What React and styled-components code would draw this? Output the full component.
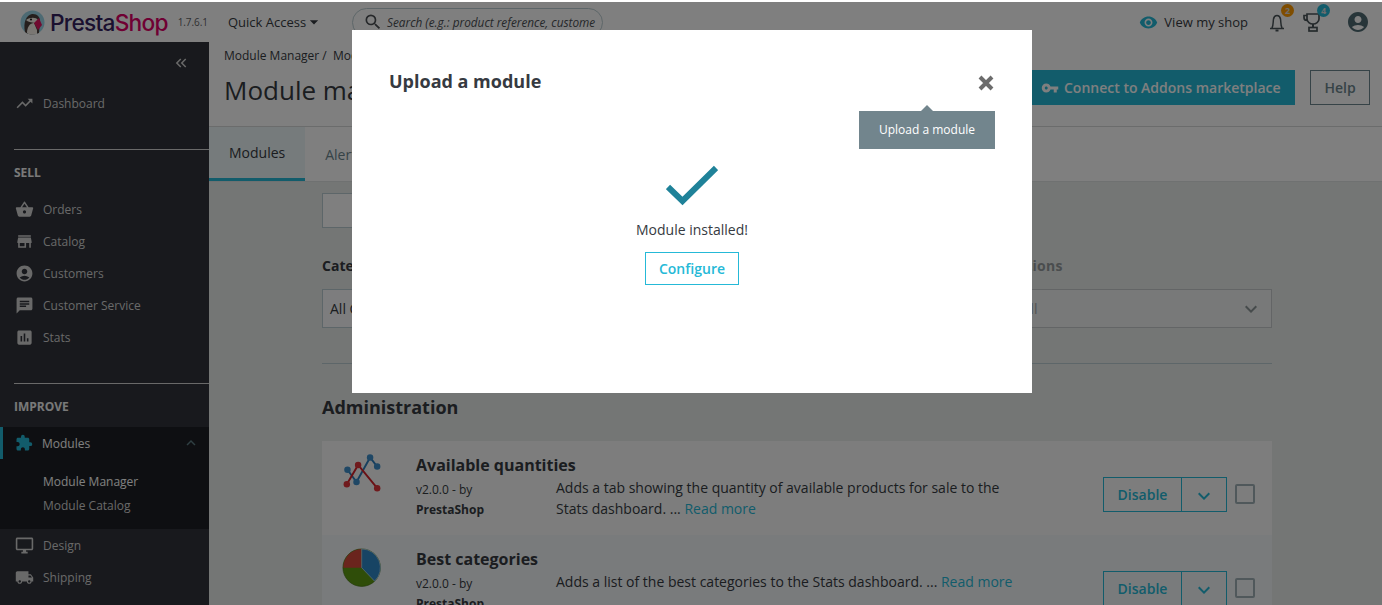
import styled, { createGlobalStyle } from "styled-components";
import {
  MdAccountCircle,
  MdArrowDropDown,
  MdAssessment,
  MdChat,
  MdExpandMore,
  MdExtension,
  MdKeyboardArrowUp,
  MdKeyboardDoubleArrowLeft,
  MdLocalShipping,
  MdSearch,
  MdShoppingBasket,
  MdStore,
  MdTrendingUp,
  MdVisibility,
  MdVpnKey,
} from "react-icons/md";

const GlobalStyle = createGlobalStyle`
  html, body {
    margin: 0;
    padding: 0;
    background: #fff;
    font-family: "Open Sans", "Liberation Sans", sans-serif;
  }
  * {
    box-sizing: border-box;
  }
`;

const Page = styled.div`
  width: 1382px;
  height: 605px;
  overflow: hidden;
  color: #363a41;
  background: #e9ecea;
`;

/* ---------- header ---------- */
const Header = styled.header`
  height: 42px;
  background: #fff;
  display: flex;
  align-items: center;
  padding: 2px 12px 0 20px;
`;

const Brand = styled.div`
  display: flex;
  align-items: center;
  width: 208px;
`;

const BrandName = styled.span`
  font-family: "Inter", sans-serif;
  font-size: 22.7px;
  font-weight: 500;
  letter-spacing: -0.75px;
  margin-left: 5px;
  color: #35205f;
  span {
    color: #df0067;
  }
`;

const Version = styled.span`
  font-size: 10px;
  letter-spacing: -0.1px;
  margin-left: 10px;
  color: #5f6265;
`;

const QuickAccess = styled.div`
  display: flex;
  align-items: center;
  font-size: 13px;
  width: 124px;
  svg {
    margin-left: -2px;
  }
`;

const SearchPill = styled.div`
  width: 251px;
  height: 29px;
  border: 1px solid #bbcdd2;
  border-radius: 15px;
  display: flex;
  align-items: center;
  gap: 4px;
  padding: 0 8px 0 10px;
  font-size: 11.8px;
  font-style: italic;
  white-space: nowrap;
  overflow: hidden;
  color: #4c5054;
  svg {
    flex: none;
  }
`;

const HeaderRight = styled.div`
  margin-left: auto;
  display: flex;
  align-items: center;
`;

const ShopLink = styled.div`
  display: flex;
  align-items: center;
  gap: 6px;
  font-size: 13px;
  margin-right: 17px;
  color: #363a41;
  svg {
    color: #25b9d7;
  }
`;

const NoticeIcon = styled.div`
  position: relative;
  display: flex;
  width: 24px;
  margin-right: ${(p) => p.$gap}px;
  color: #4b5559;
`;

const Badge = styled.span`
  position: absolute;
  top: -6px;
  right: -5px;
  width: 13px;
  height: 13px;
  border-radius: 50%;
  background: ${(p) => p.$color};
  color: #dcdcdc;
  font-size: 9px;
  font-weight: 700;
  line-height: 13px;
  text-align: center;
`;

const Account = styled.div`
  display: flex;
  color: #4f6a72;
`;

/* ---------- sidebar ---------- */
const Body = styled.div`
  display: flex;
  height: 563px;
`;

const Sidebar = styled.nav`
  width: 209px;
  flex: none;
  background: #30333a;
  font-size: 12px;
  color: #d2d2d2;
`;

const Collapse = styled.div`
  height: 45px;
  display: flex;
  justify-content: flex-end;
  align-items: center;
  padding: 0 19px 3px 0;
`;

const NavItem = styled.div`
  height: 32px;
  display: flex;
  align-items: center;
  padding-left: 15px;
  gap: 9px;
  svg {
    flex: none;
  }
`;

const NavGroup = styled.div`
  margin-bottom: 30px;
`;

const SectionTitle = styled.div`
  margin-left: 14px;
  height: 44px;
  border-top: 1px solid #d2d2d2;
  padding-top: 2px;
  display: flex;
  align-items: center;
  font-weight: 700;
  font-size: 12px;
  color: #f2f2f2;
`;

const ActiveBlock = styled.div`
  background: #1d1f24;
`;

const ActiveItem = styled.div`
  height: 32px;
  display: flex;
  align-items: center;
  gap: 9px;
  padding: 0 9px 0 12px;
  border-left: 3px solid #25b9d7;
  color: #fff;
  font-size: 12px;
  svg:first-child {
    color: #25b9d7;
  }
  svg:last-child {
    margin-left: auto;
    color: #5f7f86;
  }
`;

const SubMenu = styled.div`
  padding: 11px 0 11px 43px;
`;

const SubItem = styled.div`
  height: 24px;
  line-height: 24px;
  color: ${(p) => (p.$active ? "#fff" : "#d2d2d2")};
`;

/* ---------- main ---------- */
const Main = styled.main`
  flex: 1;
  min-width: 0;
`;

const Toolbar = styled.div`
  height: 85px;
  background: #fff;
  border-bottom: 1px solid #d6d8d8;
  padding: 6px 12px 0 15px;
  display: flex;
  justify-content: space-between;
`;

const Breadcrumb = styled.div`
  font-size: 12px;
  line-height: 16px;
`;

const Title = styled.h1`
  margin: 8px 0 0;
  font-size: 26px;
  font-weight: 400;
  line-height: 36px;
  color: #363a41;
  white-space: nowrap;
`;

const ToolbarActions = styled.div`
  display: flex;
  align-items: flex-start;
  gap: 15px;
  padding-top: 22px;
`;

const PrimaryButton = styled.button`
  height: 35px;
  width: 263px;
  border: 0;
  background: #25b9d7;
  color: #fff;
  font: 600 14px "Open Sans", sans-serif;
  display: flex;
  align-items: center;
  gap: 5px;
  padding: 0 0 0 9px;
`;

const HelpButton = styled.button`
  height: 35px;
  width: 60px;
  border: 1px solid #6c868e;
  background: #fff;
  color: #6c868e;
  font: 600 14px "Open Sans", sans-serif;
`;

const Tabs = styled.div`
  height: 55px;
  background: #fff;
  border-bottom: 1px solid #dfe3e3;
  display: flex;
`;

const Tab = styled.div`
  height: 54px;
  padding: 0 20px;
  font-size: 14px;
  display: flex;
  align-items: center;
  color: ${(p) => (p.$active ? "#363a41" : "#6c868e")};
  background: ${(p) => (p.$active ? "#ecf6f8" : "transparent")};
  border-bottom: ${(p) => (p.$active ? "3px solid #25b9d7" : "0")};
`;

const Content = styled.div`
  padding: 11px 110px 0 113px;
`;

const SearchField = styled.div`
  width: 600px;
  height: 35px;
  border: 1px solid #bbcdd2;
  background: #fff;
`;

const Filters = styled.div`
  display: grid;
  grid-template-columns: repeat(3, 300px);
  gap: 25px;
  margin-top: 28px;
  padding-bottom: 35px;
  border-bottom: 1px solid #bbcdd2;
`;

const FilterLabel = styled.div`
  font-size: 14px;
  font-weight: 700;
  line-height: 20px;
  margin-bottom: 13px;
  white-space: nowrap;
  letter-spacing: ${(p) => (p.$muted ? "0.3px" : "0")};
  color: ${(p) => (p.$muted ? "#959a9c" : "#363a41")};
`;

const SelectBox = styled.div`
  height: 39px;
  border: 1px solid ${(p) => (p.$muted ? "#c6cbcc" : "#bbcdd2")};
  background: ${(p) => (p.$muted ? "#f1f3f2" : "#fafbfc")};
  font-size: 14px;
  display: flex;
  align-items: center;
  justify-content: space-between;
  padding: 0 8px 0 7px;
  color: ${(p) => (p.$muted ? "#a2a7a8" : "#363a41")};
  svg {
    color: #8d9698;
  }
`;

const CategoryTitle = styled.h2`
  margin: 31px 0 21px;
  font-size: 18px;
  font-weight: 700;
  line-height: 25px;
`;

const ModuleRow = styled.div`
  height: 94px;
  background: ${(p) => (p.$alt ? "#f3f6f9" : "#fafbfb")};
  display: flex;
  padding: 12px 17px 0 19px;
`;

const ModuleIcon = styled.div`
  width: 42px;
  margin-right: 33px;
  flex: none;
`;

const ModuleInfo = styled.div`
  width: 140px;
  flex: none;
  padding-top: 1px;
`;

const ModuleName = styled.div`
  font-size: 16px;
  font-weight: 700;
  line-height: 22px;
  white-space: nowrap;
  margin-bottom: 4px;
`;

const ModuleMeta = styled.div`
  font-size: 12px;
  line-height: 20px;
  b {
    display: block;
  }
`;

const ModuleDesc = styled.div`
  width: 470px;
  flex: none;
  font-size: 14px;
  line-height: 21px;
  padding-top: 24px;
  a {
    color: #25b9d7;
  }
`;

const ModuleActions = styled.div`
  margin-left: auto;
  display: flex;
  align-items: flex-start;
  padding-top: 24px;
`;

const SplitButton = styled.div`
  display: flex;
  height: 35px;
  width: 124px;
  border: 1px solid #25b9d7;
  color: #25b9d7;
  font-size: 14px;
  font-weight: 600;
`;

const SplitMain = styled.div`
  width: 78px;
  display: flex;
  align-items: center;
  justify-content: center;
  border-right: 1px solid #25b9d7;
`;

const SplitToggle = styled.div`
  flex: 1;
  display: flex;
  align-items: center;
  justify-content: center;
  padding-top: 2px;
`;

const Checkbox = styled.div`
  width: 20px;
  height: 20px;
  margin: 7px 0 0 8px;
  border: 2px solid #a0b1b6;
  border-radius: 2px;
`;

/* ---------- modal ---------- */
const Backdrop = styled.div`
  position: fixed;
  inset: 2px 0 0;
  background: rgba(0, 0, 0, 0.5);
`;

const Modal = styled.div`
  position: absolute;
  left: 352px;
  top: 28px;
  width: 680px;
  height: 363px;
  background: #fff;
  padding: 37px 37px 0;
  display: flex;
  flex-direction: column;
  align-items: center;
`;

const ModalTitle = styled.h4`
  align-self: stretch;
  margin: 0;
  font-size: 18px;
  font-weight: 700;
  line-height: 28px;
  color: #363a41;
`;

const CloseButton = styled.svg`
  position: absolute;
  left: 626px;
  top: 45px;
`;

const Tooltip = styled.div`
  position: absolute;
  left: 507px;
  top: 81px;
  width: 136px;
  height: 38px;
  padding-bottom: 1px;
  background: #72858d;
  color: #fff;
  font-size: 12px;
  display: flex;
  align-items: center;
  justify-content: center;
  &::before {
    content: "";
    position: absolute;
    top: -6px;
    left: 62px;
    border-left: 6px solid transparent;
    border-right: 6px solid transparent;
    border-bottom: 6px solid #72858d;
  }
`;

const Success = styled.div`
  margin-top: 70px;
  display: flex;
  flex-direction: column;
  align-items: center;
`;

const SuccessText = styled.div`
  margin-top: 13px;
  font-size: 14px;
  line-height: 22px;
  color: #363a41;
`;

const ConfigureButton = styled.button`
  margin-top: 11px;
  width: 94px;
  height: 33px;
  border: 1px solid #25b9d7;
  background: #fff;
  color: #25b9d7;
  font: 600 14px "Open Sans", sans-serif;
  padding: 0;
`;

const PuffinLogo = () => (
  <svg width="25" height="25" viewBox="0 0 25 25">
    <circle cx="12.5" cy="12.5" r="12" fill="#9ad4e6" />
    <path d="M5 22 C3 13 6 5 12 4 C17 3.5 20 7 20 11 L19 23 C14 25 8 25 5 22 Z" fill="#4a3f3a" />
    <path d="M6 10 C10 7 16 7 18 10 L15 13 C11 12 8 12 6 10 Z" fill="#f4efe6" />
    <path d="M7 23 C7 17 10 13 14 13 L17 20 L17 24 C13 25 9 25 7 23 Z" fill="#f4efe6" />
    <path d="M14 13 L19 8 L22 15 L18 20 Z" fill="#e0155f" />
    <circle cx="11" cy="9.5" r="1.1" fill="#222" />
  </svg>
);

const BellIcon = () => (
  <svg width="24" height="24" viewBox="0 0 24 24" fill="none" stroke="currentColor" strokeWidth="1.5">
    <path d="M5 18.5 H19 M7 18 C8.5 15 8 12 8.5 9 C9 6.5 10.5 5.5 12 5.5 C13.5 5.5 15 6.5 15.5 9 C16 12 15.5 15 17 18" />
    <path d="M10.5 20.5 H13.5" strokeWidth="2" />
  </svg>
);

const TrophyIcon = () => (
  <svg width="24" height="24" viewBox="0 0 24 24" fill="none" stroke="currentColor" strokeWidth="1.7">
    <path d="M6 4 H18 V9 C18 12 15 14 12 14 C9 14 6 12 6 9 Z M6 5.5 H3 V7.5 C3 9.5 4.5 10.5 6 10.5" />
    <path d="M12 14 V17" strokeWidth="2" />
    <rect x="8" y="17.5" width="8" height="3.5" />
  </svg>
);

const DesktopIcon = () => (
  <svg width="19" height="19" viewBox="0 0 24 24" fill="currentColor">
    <path
      fillRule="evenodd"
      d="M21 2H3c-1.1 0-2 .9-2 2v12c0 1.1.9 2 2 2h7v2H8v2h8v-2h-2v-2h7c1.1 0 2-.9 2-2V4c0-1.1-.9-2-2-2zm0 14H3V4h18v12z"
    />
  </svg>
);

const ChartIcon = () => (
  <svg width="42" height="42" viewBox="60 178 130 130" fill="none">
    <polyline points="80,230 108,268 150,192 172,220" stroke="#2f7fbd" strokeWidth="6" />
    <polyline points="78,275 113,215 172,287" stroke="#d5222a" strokeWidth="6" />
    {[[80, 230], [108, 268], [150, 192], [172, 220]].map(([x, y]) => (
      <circle key={x} cx={x} cy={y} r="10" fill="#3f8fcb" />
    ))}
    {[[78, 275], [113, 215], [172, 287]].map(([x, y]) => (
      <circle key={x} cx={x} cy={y} r="10" fill="#e0343a" />
    ))}
  </svg>
);

const PieIcon = () => (
  <svg width="42" height="42" viewBox="62 458 130 130">
    <circle cx="126" cy="522" r="58" fill="#5f9a12" stroke="#3c6e08" strokeWidth="2" />
    <path d="M126 522 L126 464 A58 58 0 0 0 69 522 Z" fill="#d5483a" />
    <path d="M126 522 L126 464 A58 58 0 0 1 166 564 Z" fill="#2f88c8" stroke="#cfe6f5" strokeWidth="2" />
  </svg>
);

const Row = ({ icon, name, desc, alt }) => (
  <ModuleRow $alt={alt}>
    <ModuleIcon>{icon}</ModuleIcon>
    <ModuleInfo>
      <ModuleName>{name}</ModuleName>
      <ModuleMeta>
        v2.0.0 - by
        <b>PrestaShop</b>
      </ModuleMeta>
    </ModuleInfo>
    <ModuleDesc>
      {desc} ... <a>Read more</a>
    </ModuleDesc>
    <ModuleActions>
      <SplitButton>
        <SplitMain>Disable</SplitMain>
        <SplitToggle>
          <MdExpandMore size={24} />
        </SplitToggle>
      </SplitButton>
      <Checkbox />
    </ModuleActions>
  </ModuleRow>
);

const App = () => {
  return (
    <Page>
      <GlobalStyle />
      <Header>
        <Brand>
          <PuffinLogo />
          <BrandName>
            Presta<span>Shop</span>
          </BrandName>
          <Version>1.7.6.1</Version>
        </Brand>
        <QuickAccess>
          Quick Access
          <MdArrowDropDown size={20} />
        </QuickAccess>
        <SearchPill>
          <MdSearch size={20} />
          Search (e.g.: product reference, custome
        </SearchPill>
        <HeaderRight>
          <ShopLink>
            <MdVisibility size={19} />
            View my shop
          </ShopLink>
          <NoticeIcon $gap={12}>
            <BellIcon />
            <Badge $color="#ff9a00">2</Badge>
          </NoticeIcon>
          <NoticeIcon $gap={21}>
            <TrophyIcon />
            <Badge $color="#25b9d7">4</Badge>
          </NoticeIcon>
          <Account>
            <MdAccountCircle size={24} />
          </Account>
        </HeaderRight>
      </Header>
      <Body>
        <Sidebar>
          <Collapse>
            <MdKeyboardDoubleArrowLeft size={18} />
          </Collapse>
          <NavGroup>
            <NavItem>
              <MdTrendingUp size={19} />
              Dashboard
            </NavItem>
          </NavGroup>
          <SectionTitle>SELL</SectionTitle>
          <NavGroup>
            <NavItem>
              <MdShoppingBasket size={19} />
              Orders
            </NavItem>
            <NavItem>
              <MdStore size={19} />
              Catalog
            </NavItem>
            <NavItem>
              <MdAccountCircle size={19} />
              Customers
            </NavItem>
            <NavItem>
              <MdChat size={19} />
              Customer Service
            </NavItem>
            <NavItem>
              <MdAssessment size={19} />
              Stats
            </NavItem>
          </NavGroup>
          <SectionTitle>IMPROVE</SectionTitle>
          <ActiveBlock>
            <ActiveItem>
              <MdExtension size={18} />
              Modules
              <MdKeyboardArrowUp size={18} />
            </ActiveItem>
            <SubMenu>
              <SubItem $active>Module Manager</SubItem>
              <SubItem>Module Catalog</SubItem>
            </SubMenu>
          </ActiveBlock>
          <NavItem>
            <DesktopIcon />
            Design
          </NavItem>
          <NavItem>
            <MdLocalShipping size={19} />
            Shipping
          </NavItem>
        </Sidebar>
        <Main>
          <Toolbar>
            <div>
              <Breadcrumb>Module Manager&nbsp;/&nbsp; Modules</Breadcrumb>
              <Title>Module manager</Title>
            </div>
            <ToolbarActions>
              <PrimaryButton>
                <MdVpnKey size={18} />
                Connect to Addons marketplace
              </PrimaryButton>
              <HelpButton>Help</HelpButton>
            </ToolbarActions>
          </Toolbar>
          <Tabs>
            <Tab $active>Modules</Tab>
            <Tab>Alerts</Tab>
          </Tabs>
          <Content>
            <SearchField />
            <Filters>
              <div>
                <FilterLabel>Category</FilterLabel>
                <SelectBox>All Categories</SelectBox>
              </div>
              <div>
                <FilterLabel>Status</FilterLabel>
                <SelectBox>Show all modules</SelectBox>
              </div>
              <div>
                <FilterLabel $muted>Bulk Actions</FilterLabel>
                <SelectBox $muted>
                  Uninstall
                  <MdExpandMore size={24} />
                </SelectBox>
              </div>
            </Filters>
            <CategoryTitle>Administration</CategoryTitle>
            <Row
              icon={<ChartIcon />}
              name="Available quantities"
              desc="Adds a tab showing the quantity of available products for sale to the Stats dashboard."
            />
            <Row
              alt
              icon={<PieIcon />}
              name="Best categories"
              desc="Adds a list of the best categories to the Stats dashboard."
            />
          </Content>
        </Main>
      </Body>
      <Backdrop>
        <Modal>
          <ModalTitle>Upload a module</ModalTitle>
          <CloseButton width="16" height="16" viewBox="0 0 16 16">
            <path d="M2 2 L14 14 M14 2 L2 14" stroke="#6c6c6c" strokeWidth="4" />
          </CloseButton>
          <Tooltip>Upload a module</Tooltip>
          <Success>
            <svg width="52" height="41" viewBox="0 0 52 41">
              <polyline points="2,22 16.5,36 50,3" fill="none" stroke="#1f8299" strokeWidth="6" />
            </svg>
            <SuccessText>Module installed!</SuccessText>
            <ConfigureButton>Configure</ConfigureButton>
          </Success>
        </Modal>
      </Backdrop>
    </Page>
  );
};

export default App;
